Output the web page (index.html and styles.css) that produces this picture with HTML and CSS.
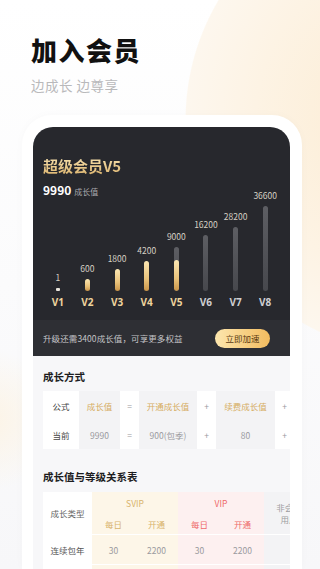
FILE: index.html
```html
<!DOCTYPE html>
<html lang="zh">
<head>
<meta charset="utf-8">
<title>加入会员</title>
<link rel="stylesheet" href="styles.css">
</head>
<body>
<div class="page">
  <header class="hero">
    <h1 class="hero-title">加入会员</h1>
    <p class="hero-sub">边成长 边尊享</p>
  </header>
  <div class="phone">
    <div class="screen">
      <section class="vip-card">
        <div class="vip-head">
          <div class="vip-name">超级会员V5</div>
          <div class="vip-score"><b>9990</b><span>成长值</span></div>
        </div>
        <div class="chart">
          <div class="col on"><span class="val">1</span><i class="bar tiny"></i><span class="lv">V1</span></div>
          <div class="col on"><span class="val">600</span><i class="bar gold" style="height:12px"></i><span class="lv">V2</span></div>
          <div class="col on"><span class="val">1800</span><i class="bar gold" style="height:22px"></i><span class="lv">V3</span></div>
          <div class="col on"><span class="val">4200</span><i class="bar gold" style="height:30px"></i><span class="lv">V4</span></div>
          <div class="col on"><span class="val">9000</span><i class="bar grey" style="height:44px"><i class="fill" style="height:31px"></i></i><span class="lv">V5</span></div>
          <div class="col"><span class="val">16200</span><i class="bar grey" style="height:56px"></i><span class="lv">V6</span></div>
          <div class="col"><span class="val">28200</span><i class="bar grey" style="height:64px"></i><span class="lv">V7</span></div>
          <div class="col"><span class="val">36600</span><i class="bar grey" style="height:85px"></i><span class="lv">V8</span></div>
        </div>
        <div class="vip-foot">
          <span class="tip">升级还需3400成长值，可享更多权益</span>
          <span class="btn">立即加速</span>
        </div>
      </section>
      <section class="block">
        <h2 class="block-title">成长方式</h2>
        <div class="formula">
          <div class="c lab">公式</div>
          <div class="c v gold">成长值</div>
          <div class="c op">=</div>
          <div class="c v gold">开通成长值</div>
          <div class="c op">+</div>
          <div class="c v gold">续费成长值</div>
          <div class="c op">+</div>
          <div class="c lab">当前</div>
          <div class="c v">9990</div>
          <div class="c op">=</div>
          <div class="c v">900(包季)</div>
          <div class="c op">+</div>
          <div class="c v">80</div>
          <div class="c op">+</div>
        </div>
        <h2 class="block-title second">成长值与等级关系表</h2>
        <div class="levels">
          <div class="t type">成长类型</div>
          <div class="t sv span2">SVIP</div>
          <div class="t vp span2">VIP</div>
          <div class="t nm">非会员用户</div>
          <div class="t sv">每日</div>
          <div class="t sv">开通</div>
          <div class="t vp">每日</div>
          <div class="t vp">开通</div>
          <div class="t rl row">连续包年</div>
          <div class="t svd row">30</div>
          <div class="t svd row">2200</div>
          <div class="t vpd row">30</div>
          <div class="t vpd row">2200</div>
          <div class="t nmd row"></div>
          <div class="t rl row"></div>
          <div class="t svd row"></div>
          <div class="t svd row"></div>
          <div class="t vpd row"></div>
          <div class="t vpd row"></div>
          <div class="t nmd row"></div>
        </div>
      </section>
    </div>
  </div>
</div>
</body>
</html>
```
FILE: styles.css
```css
* { box-sizing: border-box; margin: 0; padding: 0; }
html, body { height: 100%; }
body {
  font-family: "Noto Sans CJK SC", "Noto Sans", sans-serif;
  overflow: hidden;
  background:
    radial-gradient(circle 235px at 420px 120px, #fbeacf 0%, #fdf3e4 70%, #fdf7ee 99.5%, rgba(253,247,238,0) 100%),
    radial-gradient(circle 70px at -10px 420px, #fcf4e6 0%, rgba(252,244,230,0) 100%),
    linear-gradient(180deg, #ffffff 0%, #f7f7f9 100%);
}
.page { height: 569px; display: flex; flex-direction: column; }
.hero { padding: 35px 0 0 31px; }
.hero-title {
  font-size: 26px; line-height: 30px; font-weight: 900; color: #111;
  letter-spacing: 1.5px;
}
.hero-sub {
  margin-top: 10px; font-size: 13.5px; line-height: 20px; color: #b9b9bb;
  letter-spacing: 0.5px;
}
.phone {
  margin: 20px 18px 0 22px;
  flex: 1;
  background: #fff;
  border-radius: 30px 30px 0 0;
  padding: 12px 12px 0 11px;
  box-shadow: 0 0 10px rgba(0,0,0,0.025);
  min-height: 0;
}
.screen {
  height: 100%;
  background: #f7f7f9;
  border-radius: 20px 20px 0 0;
  overflow: hidden;
}
.vip-card { background: #27282d; }
.vip-head { padding: 26px 0 0 10px; }
.vip-name {
  font-size: 15px; line-height: 20px; font-weight: 700;
  background: linear-gradient(180deg, #f8e2b0 0%, #dcb46e 100%);
  -webkit-background-clip: text; background-clip: text; color: transparent;
  display: inline-block;
}
.vip-score { margin-top: 6px; line-height: 14px; display: flex; align-items: baseline; }
.vip-score b { font-size: 12px; color: #fff; font-weight: 700; }
.vip-score span { font-size: 8px; color: #a9a9ad; margin-left: 3px; }
.chart {
  display: flex; padding: 0 10px; height: 119px; margin-top: -10px;
  align-items: stretch;
}
.col {
  flex: 1; display: flex; flex-direction: column; align-items: center; justify-content: flex-end;
}
.val { font-size: 8.5px; line-height: 10px; color: #d6d0c4; margin-bottom: 6px; }
.bar { display: flex; flex-direction: column; justify-content: flex-end; width: 5px; border-radius: 3px; overflow: hidden; }
.bar.tiny { width: 4px; height: 3px; background: #e8e4dc; border-radius: 1px; }
.bar.gold { background: linear-gradient(180deg, #fbe7b3 0%, #e9c27a 60%, #c99448 100%); }
.bar.grey { background: linear-gradient(180deg, #5d5e63 0%, #47484d 100%); }
.fill { display: block; width: 100%; background: linear-gradient(180deg, #fbe7b3 0%, #e9c27a 60%, #c99448 100%); border-radius: 3px; }
.lv { margin-top: 5px; font-size: 10px; line-height: 12px; font-weight: 700; color: #cfcfd2; font-family: "Noto Sans", "Liberation Sans", sans-serif; }
.col.on .lv { color: #eed49d; }
.vip-foot {
  margin-top: 12px; height: 36px; background: #2e2f34;
  display: flex; align-items: center; justify-content: space-between;
  padding: 0 20px 0 10px;
}
.tip { font-size: 8.5px; color: #c4c4c7; letter-spacing: 0.1px; }
.btn {
  width: 55px; height: 19px; border-radius: 10px;
  background: linear-gradient(90deg, #fce6ae 0%, #f3bc5f 100%);
  color: #5b3a12; font-size: 8.5px; line-height: 19px; text-align: center;
}
.block { padding: 13px 0 0 10px; }
.block-title { font-size: 10.5px; line-height: 16px; font-weight: 700; color: #1d1d1f; margin-bottom: 6px; }
.block-title.second { margin-top: 20px; margin-bottom: 7px; }
.formula {
  display: grid;
  grid-template-columns: 36px 41px 19px 58px 19px 59px 19px;
  grid-auto-rows: 29px;
  width: 251px;
}
.c { display: flex; align-items: center; justify-content: center; font-size: 8.5px; white-space: nowrap; background: #fff; color: #8e8e92; }
.c.lab { color: #444; }
.c.v { background: #f3f3f5; color: #9a9a9e; }
.c.v.gold { color: #d6ad62; }
.c.op { color: #9a9a9e; }
.levels {
  display: grid;
  grid-template-columns: 49px 43px 43px 43px 43px 50px;
  grid-template-rows: 21px 21px 30px 30px;
  width: 271px;
}
.t { display: flex; align-items: center; justify-content: center; font-size: 8.5px; white-space: nowrap; }
.t.row { border-top: 1px solid #fff; }
.type { grid-row: span 2; background: #fff; color: #666; }
.span2 { grid-column: span 2; }
.t.sv { background: #fdf6e8; color: #d8b36c; }
.t.vp { background: #fdf0f0; color: #ee6a6a; }
.t.nm { grid-row: span 2; background: #f3f3f5; color: #9d9da1; white-space: normal; text-align: center; line-height: 12px; padding: 0 12px; }
.t.rl { background: #fff; color: #555; }
.t.svd { background: #fdf6e8; color: #9a9a9e; }
.t.vpd { background: #fdf0f0; color: #9a9a9e; }
.t.nmd { background: #f3f3f5; }
```
